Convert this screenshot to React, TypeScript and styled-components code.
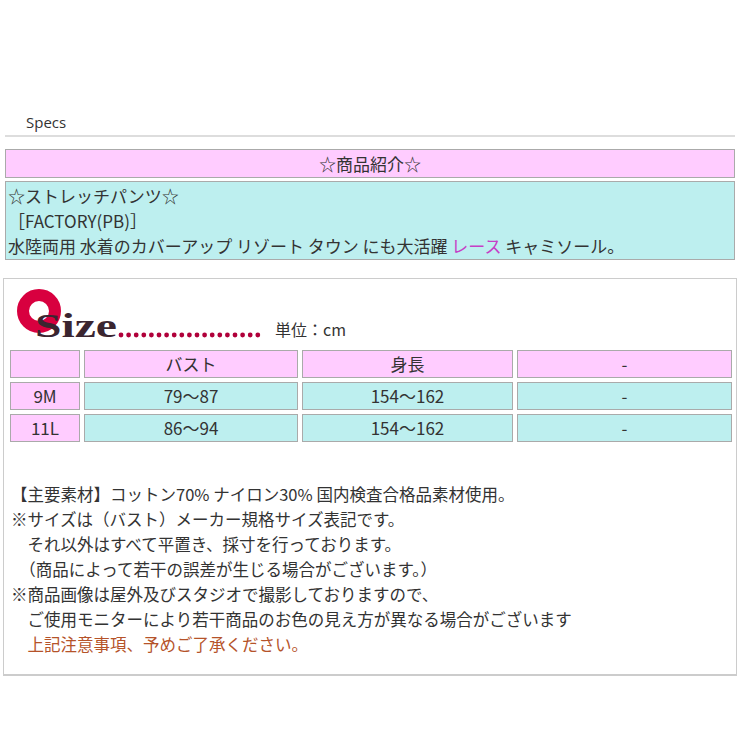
import React from "react";
import styled, { createGlobalStyle } from "styled-components";

const Global = createGlobalStyle`
  body { margin: 0; background: #fff; font-family: "Noto Sans CJK JP", "Liberation Sans", sans-serif; color: #333; }
`;

const Page = styled.div`
  width: 740px;
  padding-top: 112px;
`;

const SpecsTitle = styled.div`
  margin: 0 5px;
  padding: 0 0 3px 21px;
  font-family: "Open Sans", "Liberation Sans", sans-serif;
  font-size: 15px;
  border-bottom: 2px solid #ddd;
`;

const IntroBox = styled.div`
  margin: 12px 5px 0;
  display: flex;
  flex-direction: column;
  gap: 3px;
`;

const Cell = styled.div<{ $tone: "pink" | "cyan"; $align?: string }>`
  background: ${(p) => (p.$tone === "pink" ? "#ffccff" : "#bdefef")};
  border: 1px solid #aaa;
  text-align: ${(p) => p.$align || "left"};
  font-size: 17px;
  line-height: 25px;
  padding: 1px 2px;
`;

const Lace = styled.span`
  color: #c63fc6;
`;

const Panel = styled.div`
  margin: 18px 3px 0;
  border: 1px solid #ccc;
  border-bottom-width: 2px;
  height: 387px;
  padding: 8px 5px 0;
`;

const SizeHead = styled.div`
  display: flex;
  align-items: flex-end;
  gap: 8px;
  padding-left: 8px;
  height: 56px;
`;

const Unit = styled.span`
  font-size: 16px;
  margin-bottom: 2px;
`;

const Table = styled.div`
  margin-top: 7px;
  display: grid;
  grid-template-columns: 70px 214px 211px 215px;
  gap: 4px;
  padding-left: 1px;
`;

const TCell = styled(Cell)`
  height: 28px;
  line-height: 26px;
  text-align: center;
  padding: 0;
  box-sizing: border-box;
`;

const Notes = styled.div`
  margin-top: 40px;
  font-size: 16.5px;
  line-height: 25px;
  padding-left: 2px;
`;

const Warn = styled.div`
  color: #b5532a;
`;

const SizeLogo = () => (
  <svg width="250" height="56" viewBox="0 0 250 56">
    <circle cx="22" cy="24" r="16" fill="none" stroke="#d8003f" strokeWidth="12" />
    <text x="18" y="50" fontFamily="'Liberation Serif', serif" fontWeight="bold" fontSize="33" textLength="82" lengthAdjust="spacingAndGlyphs" fill="#3a2530">Size</text>
    {Array.from({ length: 19 }).map((_, i) => (
      <circle key={i} cx={104 + i * 7.6} cy={48} r={2.4} fill="#b0003a" />
    ))}
  </svg>
);

const rows = [
  ["9M", "79～87", "154～162", "-"],
  ["11L", "86～94", "154～162", "-"],
];

export default function App() {
  return (
    <Page>
      <Global />
      <SpecsTitle>Specs</SpecsTitle>
      <IntroBox>
        <Cell $tone="pink" $align="center">☆商品紹介☆</Cell>
        <Cell $tone="cyan">
          ☆ストレッチパンツ☆<br />
          ［FACTORY(PB)］<br />
          水陸両用 水着のカバーアップ リゾート タウン にも大活躍 <Lace>レース</Lace> キャミソール。
        </Cell>
      </IntroBox>
      <Panel>
        <SizeHead>
          <SizeLogo />
          <Unit>単位：cm</Unit>
        </SizeHead>
        <Table>
          <TCell $tone="pink" />
          <TCell $tone="pink">バスト</TCell>
          <TCell $tone="pink">身長</TCell>
          <TCell $tone="pink">-</TCell>
          {rows.map((r) =>
            r.map((v, i) => (
              <TCell key={r[0] + i} $tone={i === 0 ? "pink" : "cyan"}>{v}</TCell>
            ))
          )}
        </Table>
        <Notes>
          <div>【主要素材】コットン70% ナイロン30% 国内検査合格品素材使用。</div>
          <div>※サイズは（バスト）メーカー規格サイズ表記です。</div>
          <div>　それ以外はすべて平置き、採寸を行っております。</div>
          <div>　（商品によって若干の誤差が生じる場合がございます。）</div>
          <div>※商品画像は屋外及びスタジオで撮影しておりますので、</div>
          <div>　ご使用モニターにより若干商品のお色の見え方が異なる場合がございます</div>
          <Warn>　上記注意事項、予めご了承ください。</Warn>
        </Notes>
      </Panel>
    </Page>
  );
}
